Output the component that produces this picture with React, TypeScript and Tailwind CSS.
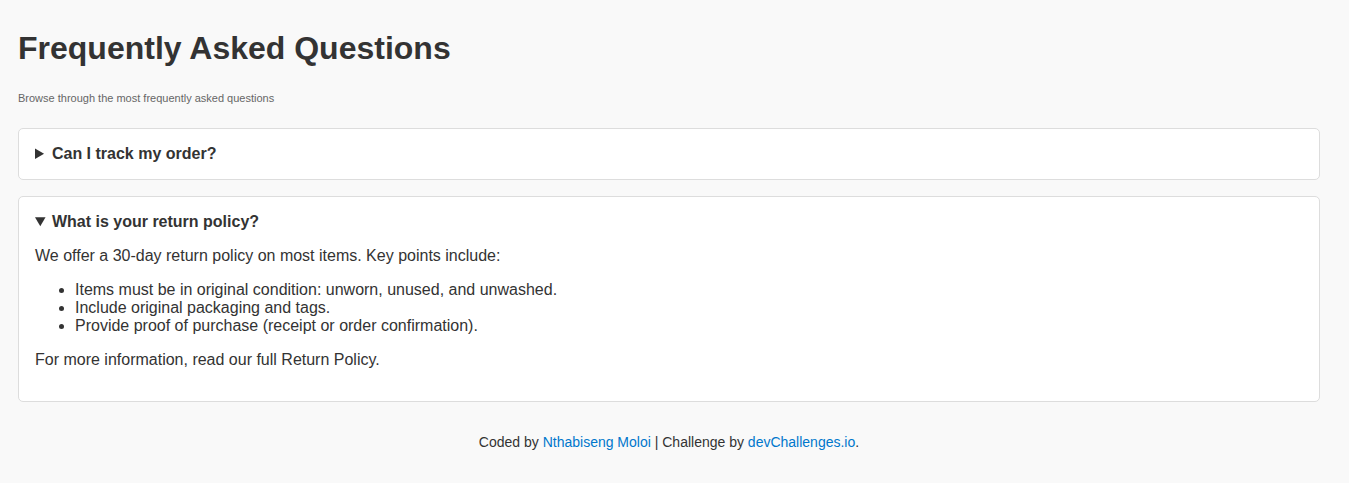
import type { ReactNode } from "react";

function FaqItem({ question, open, children }: { question: string; open?: boolean; children: ReactNode }) {
  return (
    <details
      open={open}
      className="mb-4 rounded-[5px] border border-[#dddddd] bg-white px-4 pt-4 pb-4"
    >
      <summary className="cursor-pointer leading-[18px] font-bold">{question}</summary>
      {children}
    </details>
  );
}

export default function App() {
  return (
    <div className="min-h-screen bg-[#f9f9f9] py-7 pr-[29px] pl-[18px] font-['Liberation_Sans',Arial,sans-serif] text-base leading-[18px] text-[#333333]">
      <main>
        <h1 className="text-[32px] leading-10 font-bold">Frequently Asked Questions</h1>
        <p className="mt-6 mb-6 text-[11px] leading-3 text-[#666666]">
          Browse through the most frequently asked questions
        </p>
        <FaqItem question="Can I track my order?">
          <p className="mt-4">
            Yes. Once your order ships, you will receive an email with a tracking link.
          </p>
        </FaqItem>
        <FaqItem question="What is your return policy?" open>
          <p className="mt-4">We offer a 30-day return policy on most items. Key points include:</p>
          <ul className="mt-4 list-disc pl-10">
            <li>Items must be in original condition: unworn, unused, and unwashed.</li>
            <li>Include original packaging and tags.</li>
            <li>Provide proof of purchase (receipt or order confirmation).</li>
          </ul>
          <p className="mt-4 mb-4">For more information, read our full Return Policy.</p>
        </FaqItem>
      </main>
      <footer className="mt-8 text-center text-sm leading-4">
        Coded by <a href="#author" className="text-[#0077cc]">Nthabiseng Moloi</a> | Challenge by{" "}
        <a href="#challenge" className="text-[#0077cc]">devChallenges.io</a>.
      </footer>
    </div>
  );
}
